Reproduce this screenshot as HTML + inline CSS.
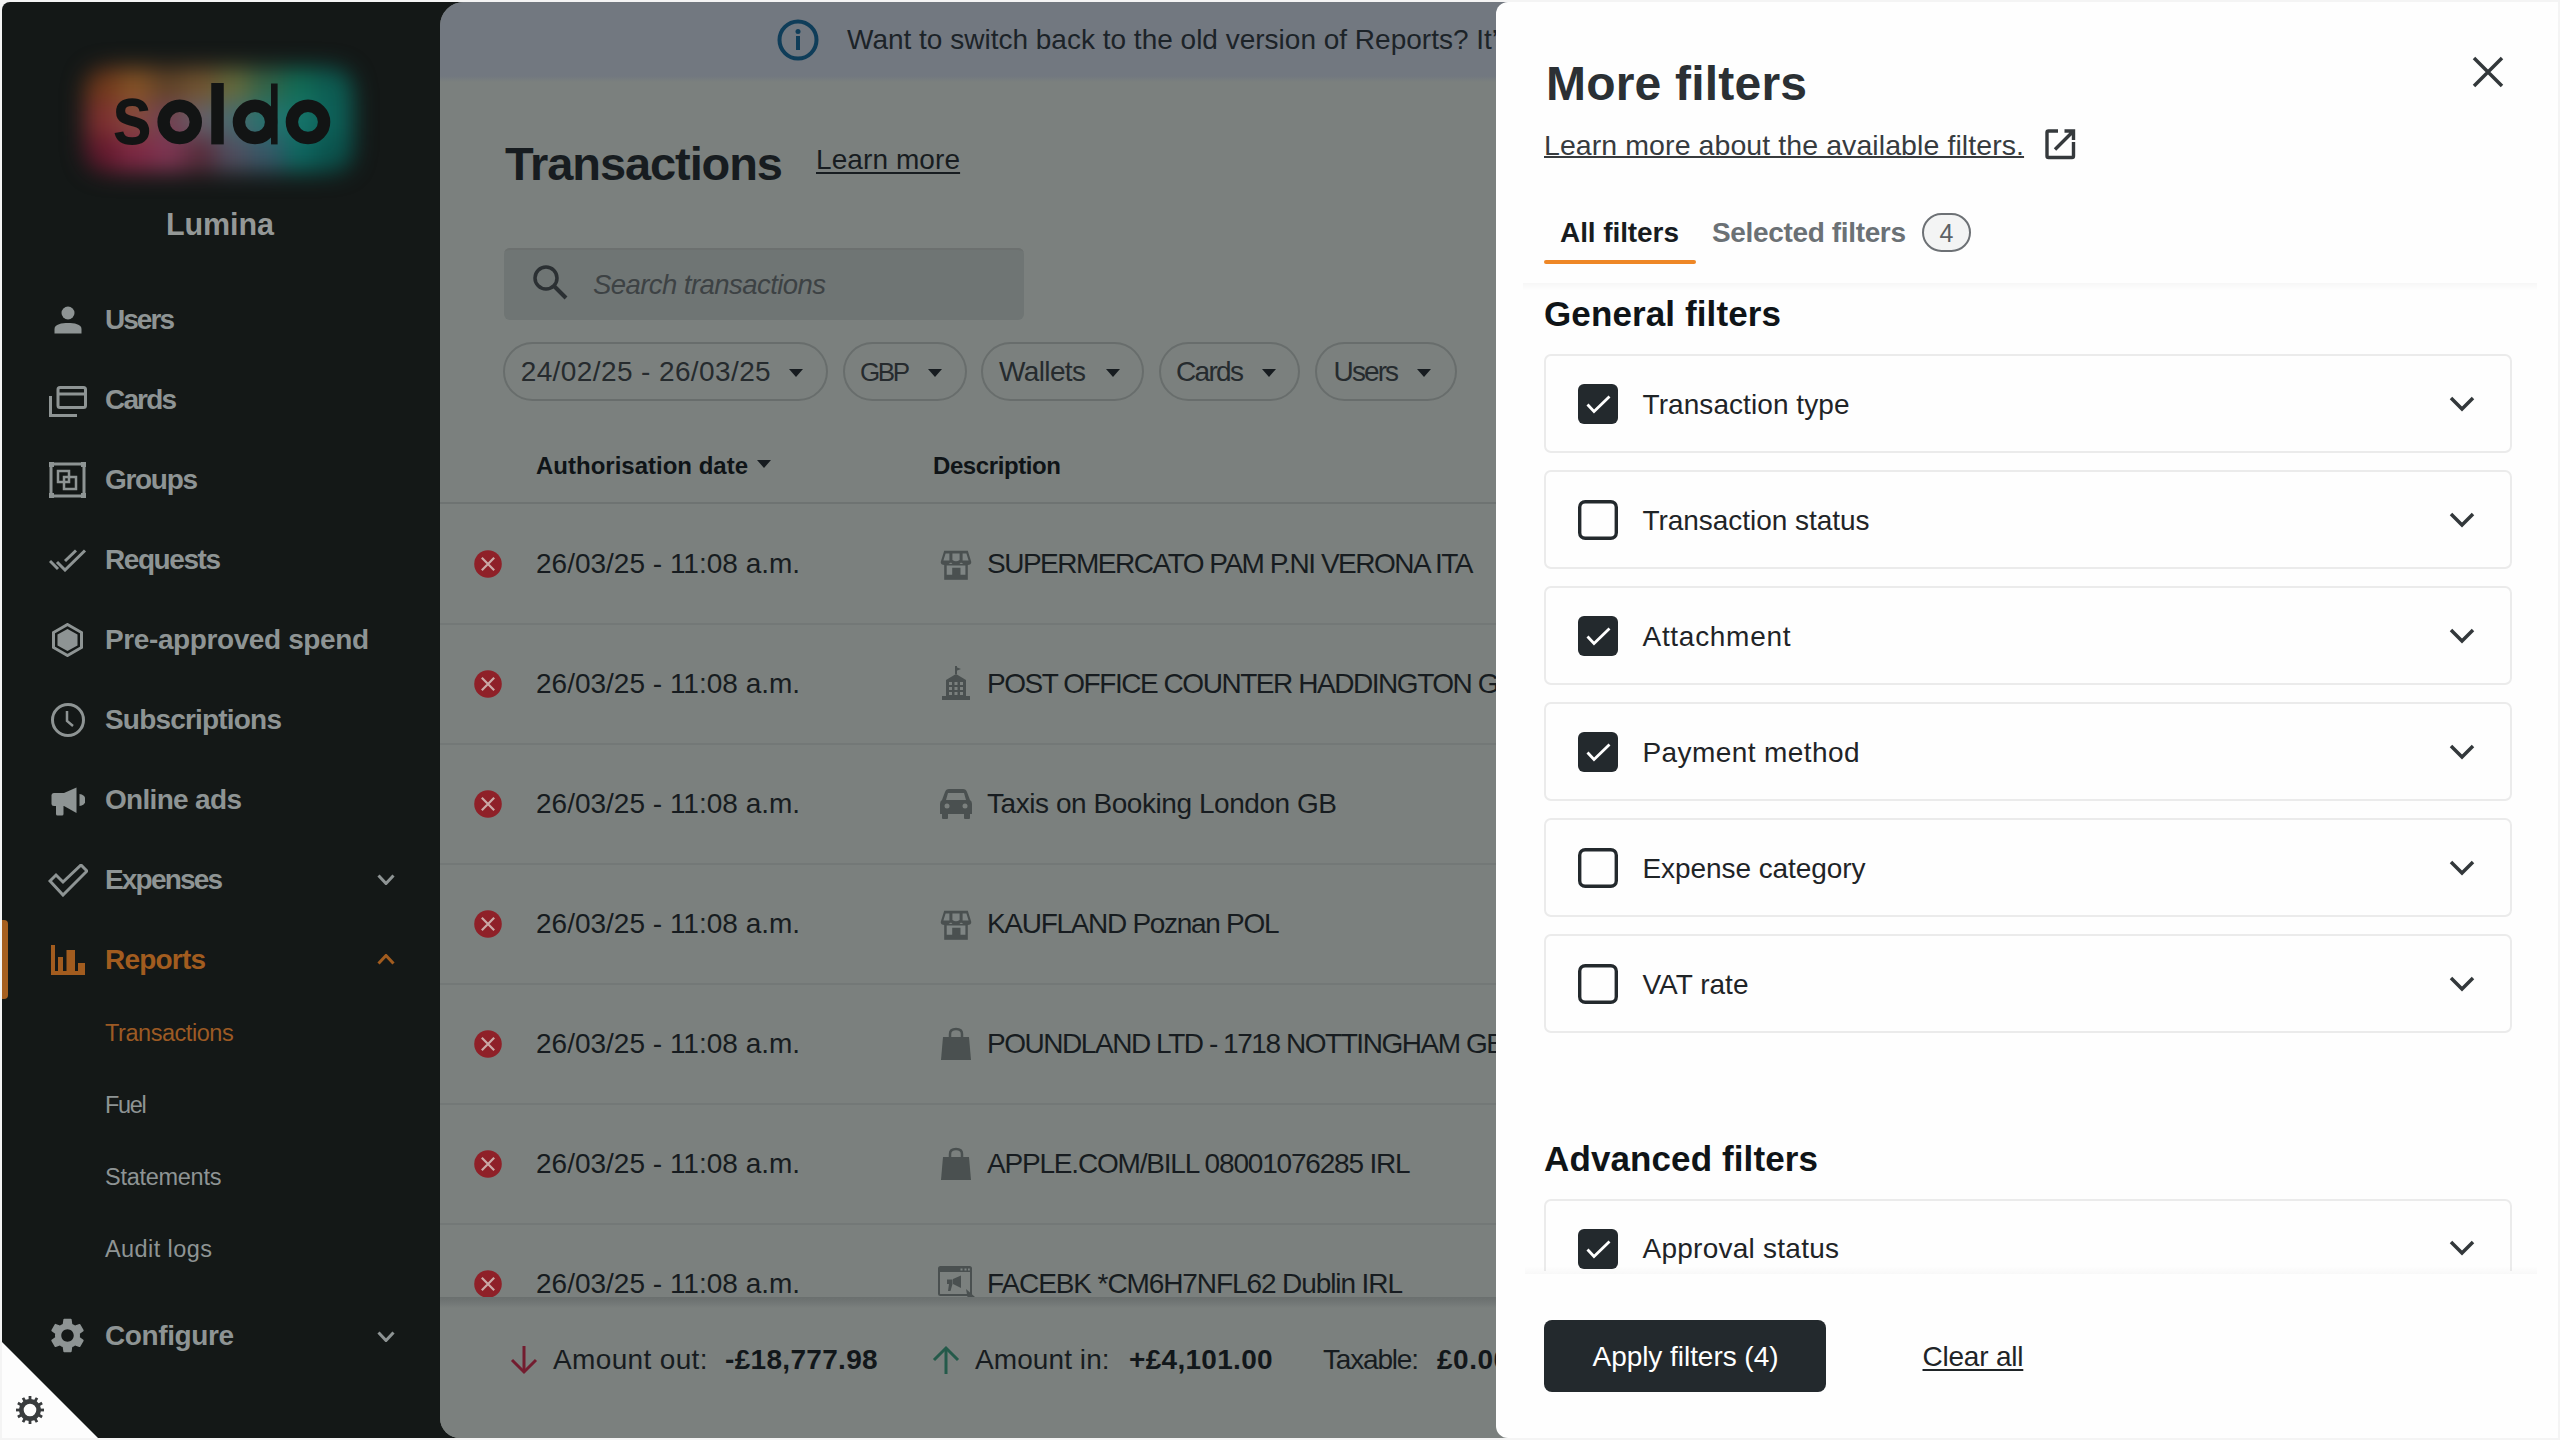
<!DOCTYPE html>
<html><head><meta charset="utf-8">
<style>
*{box-sizing:border-box;margin:0;padding:0}
html,body{width:2560px;height:1440px;overflow:hidden;background:#f4f4f4;font-family:"Liberation Sans",sans-serif;position:relative}
.abs{position:absolute;display:block}
.t{position:absolute;white-space:nowrap;line-height:1}
</style></head><body>
<div class="abs" style="left:2px;top:2px;width:2556px;height:1436px;background:#141817;border-radius:8px"></div>
<div class="abs" style="left:440px;top:2px;width:1120px;height:1436px;background:#7b807e;border-radius:24px 0 0 20px"></div>
<div class="abs" style="left:440px;top:2px;width:1120px;height:80px;background:linear-gradient(#727880 0,#727880 74px,#7b807e 80px);border-radius:24px 0 0 0"></div>
<div class="abs" style="left:0px;top:0px;width:440px;height:260px;filter:blur(11px)"><div class="abs" style="left:85px;top:68px;width:38px;height:36px;background:#70391c;border-top-left-radius:60%;"></div><div class="abs" style="left:118px;top:68px;width:38px;height:36px;background:#845226;"></div><div class="abs" style="left:151px;top:68px;width:38px;height:36px;background:#624428;"></div><div class="abs" style="left:184px;top:68px;width:38px;height:36px;background:#725430;"></div><div class="abs" style="left:217px;top:68px;width:38px;height:36px;background:#646a3c;"></div><div class="abs" style="left:250px;top:68px;width:38px;height:36px;background:#346448;"></div><div class="abs" style="left:283px;top:68px;width:38px;height:36px;background:#126c56;"></div><div class="abs" style="left:315px;top:68px;width:38px;height:36px;background:#0d5c52;border-top-right-radius:60%;"></div><div class="abs" style="left:85px;top:102px;width:38px;height:36px;background:#7e3030;"></div><div class="abs" style="left:118px;top:102px;width:38px;height:36px;background:#84493f;"></div><div class="abs" style="left:151px;top:102px;width:38px;height:36px;background:#704252;"></div><div class="abs" style="left:184px;top:102px;width:38px;height:36px;background:#665f68;"></div><div class="abs" style="left:217px;top:102px;width:38px;height:36px;background:#476a6e;"></div><div class="abs" style="left:250px;top:102px;width:38px;height:36px;background:#26726e;"></div><div class="abs" style="left:283px;top:102px;width:38px;height:36px;background:#16746a;"></div><div class="abs" style="left:315px;top:102px;width:38px;height:36px;background:#0d6058;"></div><div class="abs" style="left:85px;top:136px;width:38px;height:36px;background:#641a2e;border-bottom-left-radius:60%;"></div><div class="abs" style="left:118px;top:136px;width:38px;height:36px;background:#7e2844;"></div><div class="abs" style="left:151px;top:136px;width:38px;height:36px;background:#7e3552;"></div><div class="abs" style="left:184px;top:136px;width:38px;height:36px;background:#5a2e3e;"></div><div class="abs" style="left:217px;top:136px;width:38px;height:36px;background:#504f60;"></div><div class="abs" style="left:250px;top:136px;width:38px;height:36px;background:#385868;"></div><div class="abs" style="left:283px;top:136px;width:38px;height:36px;background:#0f6660;"></div><div class="abs" style="left:315px;top:136px;width:38px;height:36px;background:#0b544e;border-bottom-right-radius:60%;"></div></div>
<svg class="abs" style="left:100px;top:70px;" width="250" height="80" viewBox="0 0 250 80"><g fill="#121414"><rect x="111.25" y="13" width="12.5" height="61.4"/><circle cx="79.7" cy="51.9" r="16.1" fill="none" stroke="#121414" stroke-width="12.4"/><circle cx="155" cy="51.9" r="16.1" fill="none" stroke="#121414" stroke-width="12.4"/><rect x="171" y="13.5" width="6.6" height="60.9"/><circle cx="208" cy="51.9" r="16.1" fill="none" stroke="#121414" stroke-width="12.4"/></g></svg>
<div class="t" style="left:111.5px;top:71.3px;font-size:86px;font-weight:700;color:#121414;transform:scaleX(0.84);transform-origin:0 0;">s</div>
<div class="t" style="left:166px;top:209.1px;font-size:30.5px;font-weight:700;color:#949897;letter-spacing:-0.091px;">Lumina</div>
<div class="t" style="left:105px;top:306.2px;font-size:28px;font-weight:700;color:#8e9494;letter-spacing:-1.961px;">Users</div>
<div class="t" style="left:105px;top:386.2px;font-size:28px;font-weight:700;color:#8e9494;letter-spacing:-1.844px;">Cards</div>
<div class="t" style="left:105px;top:466.2px;font-size:28px;font-weight:700;color:#8e9494;letter-spacing:-1.312px;">Groups</div>
<div class="t" style="left:105px;top:546.2px;font-size:28px;font-weight:700;color:#8e9494;letter-spacing:-1.435px;">Requests</div>
<div class="t" style="left:105px;top:626.2px;font-size:28px;font-weight:700;color:#8e9494;letter-spacing:-0.396px;">Pre-approved spend</div>
<div class="t" style="left:105px;top:706.2px;font-size:28px;font-weight:700;color:#8e9494;letter-spacing:-0.809px;">Subscriptions</div>
<div class="t" style="left:105px;top:786.2px;font-size:28px;font-weight:700;color:#8e9494;letter-spacing:-0.684px;">Online ads</div>
<div class="t" style="left:105px;top:866.2px;font-size:28px;font-weight:700;color:#8e9494;letter-spacing:-1.821px;">Expenses</div>
<div class="t" style="left:105px;top:946.2px;font-size:28px;font-weight:700;color:#a25c1f;letter-spacing:-0.799px;">Reports</div>
<div class="abs" style="left:2px;top:920px;width:6px;height:79px;background:#a65f20;border-radius:0 4px 4px 0"></div>
<div class="t" style="left:105px;top:1022.0px;font-size:23.5px;font-weight:400;color:#9c5a24;letter-spacing:-0.451px;">Transactions</div>
<div class="t" style="left:105px;top:1094.0px;font-size:23.5px;font-weight:400;color:#8e9494;letter-spacing:-1.34px;">Fuel</div>
<div class="t" style="left:105px;top:1166.0px;font-size:23.5px;font-weight:400;color:#8e9494;letter-spacing:-0.275px;">Statements</div>
<div class="t" style="left:105px;top:1238.0px;font-size:23.5px;font-weight:400;color:#8e9494;letter-spacing:0.422px;">Audit logs</div>
<div class="t" style="left:105px;top:1322.2px;font-size:28px;font-weight:700;color:#8e9494;letter-spacing:-0.402px;">Configure</div>
<svg class="abs" style="left:377px;top:874px;" width="18" height="11" viewBox="0 0 18 11"><polyline points="1.5,1.5 9.0,9.5 16.5,1.5" fill="none" stroke="#8e9494" stroke-width="3"/></svg>
<svg class="abs" style="left:377px;top:954px;" width="18" height="11" viewBox="0 0 18 11"><polyline points="1.5,9.5 9.0,1.5 16.5,9.5" fill="none" stroke="#a25c1f" stroke-width="3"/></svg>
<svg class="abs" style="left:377px;top:1331px;" width="18" height="11" viewBox="0 0 18 11"><polyline points="1.5,1.5 9.0,9.5 16.5,1.5" fill="none" stroke="#8e9494" stroke-width="3"/></svg>
<svg class="abs" style="left:54px;top:306px;" width="28" height="28" viewBox="0 0 28 28"><circle cx="14" cy="7" r="6.5" fill="#8e9494"/><path d="M0.5 27.5 V23 C0.5 18 8 17 14 17 C20 17 27.5 18 27.5 23 V27.5 Z" fill="#8e9494"/></svg>
<svg class="abs" style="left:49px;top:386px;" width="38" height="31" viewBox="0 0 38 31"><rect x="9" y="1.5" width="27.5" height="20" rx="2" fill="none" stroke="#8e9494" stroke-width="3"/><line x1="9" y1="8" x2="36" y2="8" stroke="#8e9494" stroke-width="3"/><path d="M1.5 10 V29.5 H28" fill="none" stroke="#8e9494" stroke-width="3"/></svg>
<svg class="abs" style="left:49px;top:462px;" width="37" height="36" viewBox="0 0 37 36"><rect x="2" y="2" width="33" height="32" fill="none" stroke="#8e9494" stroke-width="3"/><rect x="0" y="0" width="5" height="5" fill="#8e9494"/><rect x="32" y="0" width="5" height="5" fill="#8e9494"/><rect x="0" y="31" width="5" height="5" fill="#8e9494"/><rect x="32" y="31" width="5" height="5" fill="#8e9494"/><rect x="9" y="9" width="11" height="11" fill="none" stroke="#8e9494" stroke-width="2.5"/><rect x="15" y="15" width="12" height="12" fill="none" stroke="#8e9494" stroke-width="2.5"/></svg>
<svg class="abs" style="left:49px;top:549px;" width="38" height="23" viewBox="0 0 38 23"><polyline points="1,12 9,20 " fill="none" stroke="#8e9494" stroke-width="3"/><polyline points="8,13 16,21 36,1.5" fill="none" stroke="#8e9494" stroke-width="3"/><polyline points="16,12 27,1.5" fill="none" stroke="#8e9494" stroke-width="3"/></svg>
<svg class="abs" style="left:52px;top:623px;" width="31" height="34" viewBox="0 0 31 34"><polygon points="15.5,1.5 29.5,9.5 29.5,24.5 15.5,32.5 1.5,24.5 1.5,9.5" fill="none" stroke="#8e9494" stroke-width="3"/><polygon points="15.5,6 25.5,11.5 25.5,22.5 15.5,28 5.5,22.5 5.5,11.5" fill="#8e9494"/></svg>
<svg class="abs" style="left:50px;top:702px;" width="36" height="36" viewBox="0 0 36 36"><circle cx="18" cy="18" r="15.5" fill="none" stroke="#8e9494" stroke-width="3"/><polyline points="17,9 17,19 23,24" fill="none" stroke="#8e9494" stroke-width="2.5"/></svg>
<svg class="abs" style="left:50px;top:787px;" width="35" height="29" viewBox="0 0 35 29"><rect x="1.5" y="6" width="15" height="13" rx="2.5" fill="#8e9494"/><polygon points="14,6 26.5,0.5 26.5,26 14,19" fill="#8e9494"/><rect x="6" y="16" width="7.5" height="12.5" rx="1.5" fill="#8e9494"/><path d="M29.5 7 A6 6 0 0 1 29.5 19 Z" fill="#8e9494"/></svg>
<svg class="abs" style="left:48px;top:864px;" width="40" height="33" viewBox="0 0 40 33"><polygon points="2,17 8,11 15,18 33,1 39,7 15,31" fill="none" stroke="#8e9494" stroke-width="3" stroke-linejoin="miter"/></svg>
<svg class="abs" style="left:51px;top:945px;" width="34" height="31" viewBox="0 0 34 31"><rect x="0" y="0" width="4" height="30" fill="#a25c1f"/><rect x="0" y="26" width="34" height="4" fill="#a25c1f"/><rect x="7" y="12" width="5" height="18" fill="#a25c1f"/><rect x="15.5" y="5" width="8.5" height="25" fill="#a25c1f"/><rect x="27" y="18" width="7" height="12" fill="#a25c1f"/></svg>
<svg class="abs" style="left:50px;top:1318px;" width="35" height="35" viewBox="2.6 1.9 18.8 20.2"><path fill="#8e9494" d="M19.14 12.94c.04-.3.06-.61.06-.94 0-.32-.02-.64-.07-.94l2.03-1.58a.49.49 0 0 0 .12-.61l-1.92-3.32a.49.49 0 0 0-.59-.22l-2.39.96c-.5-.38-1.03-.7-1.62-.94l-.36-2.54a.48.48 0 0 0-.48-.41h-3.840c-.24 0-.43.17-.47.41l-.36 2.54c-.59.24-1.130.57-1.62.94l-2.39-.96a.48.48 0 0 0-.59.22L2.74 8.87c-.12.21-.08.47.12.61l2.03 1.58c-.05.3-.09.63-.09.94s.02.64.07.94l-2.03 1.58a.49.49 0 0 0-.12.61l1.92 3.32c.12.22.37.29.59.22l2.39-.96c.5.38 1.03.7 1.62.94l.36 2.54c.05.24.24.41.48.41h3.84c.24 0 .44-.17.47-.41l.36-2.54c.59-.24 1.13-.56 1.62-.94l2.39.96c.22.08.47 0 .59-.22l1.92-3.32c.12-.22.07-.47-.12-.61l-2.01-1.58zM12 15.6c-1.98 0-3.6-1.62-3.6-3.6s1.62-3.6 3.6-3.6 3.6 1.62 3.6 3.6-1.62 3.6-3.6 3.6z"/></svg>
<svg class="abs" style="left:2px;top:1342px;" width="96" height="96" viewBox="0 0 96 96"><polygon points="0,0 96,96 0,96" fill="#fdfdfd"/></svg>
<svg class="abs" style="left:16px;top:1396px;" width="28" height="28" viewBox="0 0 28 28"><g fill="#393c3e"><rect x="12.6" y="0" width="2.8" height="5" transform="rotate(0 14 14)"/><rect x="12.6" y="0" width="2.8" height="5" transform="rotate(30 14 14)"/><rect x="12.6" y="0" width="2.8" height="5" transform="rotate(60 14 14)"/><rect x="12.6" y="0" width="2.8" height="5" transform="rotate(90 14 14)"/><rect x="12.6" y="0" width="2.8" height="5" transform="rotate(120 14 14)"/><rect x="12.6" y="0" width="2.8" height="5" transform="rotate(150 14 14)"/><rect x="12.6" y="0" width="2.8" height="5" transform="rotate(180 14 14)"/><rect x="12.6" y="0" width="2.8" height="5" transform="rotate(210 14 14)"/><rect x="12.6" y="0" width="2.8" height="5" transform="rotate(240 14 14)"/><rect x="12.6" y="0" width="2.8" height="5" transform="rotate(270 14 14)"/><rect x="12.6" y="0" width="2.8" height="5" transform="rotate(300 14 14)"/><rect x="12.6" y="0" width="2.8" height="5" transform="rotate(330 14 14)"/></g><circle cx="14" cy="14" r="8.6" fill="none" stroke="#393c3e" stroke-width="4.6"/></svg>
<svg class="abs" style="left:777px;top:19px;" width="42" height="42" viewBox="0 0 42 42"><circle cx="21" cy="21" r="18.5" fill="none" stroke="#0f3d59" stroke-width="4"/><rect x="19" y="17" width="4" height="14" fill="#0f3d59"/><circle cx="21" cy="12.5" r="2.5" fill="#0f3d59"/></svg>
<div class="t" style="left:847px;top:26.2px;font-size:28px;font-weight:400;color:#1c2328;">Want to switch back to the old version of Reports? It&#8217;s still available</div>
<div class="t" style="left:505px;top:140.1px;font-size:47px;font-weight:700;color:#171c20;letter-spacing:-1.087px;">Transactions</div>
<div class="t" style="left:816px;top:146.2px;font-size:28px;font-weight:400;color:#171c20;letter-spacing:0.09px;text-decoration:underline;text-underline-offset:3px;text-decoration-thickness:2px;">Learn more</div>
<div class="abs" style="left:504px;top:248px;width:520px;height:72px;background:#6f7574;border-radius:6px;box-shadow:inset 0 6px 0 -4px #6c706f"></div>
<svg class="abs" style="left:532px;top:264px;" width="38" height="38" viewBox="0 0 38 38"><circle cx="14" cy="14" r="11" fill="none" stroke="#2b3033" stroke-width="3.5"/><line x1="22" y1="22" x2="34" y2="34" stroke="#2b3033" stroke-width="4"/></svg>
<div class="t" style="left:593px;top:270.6px;font-size:27.5px;font-weight:400;color:#3d4244;letter-spacing:-0.558px;font-style:italic;">Search transactions</div>
<div class="abs" style="left:503px;top:342px;width:325px;height:59px;border:2px solid #686d6c;border-radius:30px"></div>
<div class="t" style="left:520.7px;top:357.7px;font-size:28px;font-weight:400;color:#262b2e;letter-spacing:0.396px;">24/02/25 - 26/03/25</div>
<svg class="abs" style="left:789px;top:367.5px;" width="14" height="10" viewBox="0 0 14 10"><polygon points="0,1 14,1 7,9" fill="#171c20"/></svg>
<div class="abs" style="left:842.5px;top:342px;width:124.20000000000005px;height:59px;border:2px solid #686d6c;border-radius:30px"></div>
<div class="t" style="left:860px;top:359.4px;font-size:26px;font-weight:400;color:#262b2e;letter-spacing:-2.461px;">GBP</div>
<svg class="abs" style="left:928px;top:367.5px;" width="14" height="10" viewBox="0 0 14 10"><polygon points="0,1 14,1 7,9" fill="#171c20"/></svg>
<div class="abs" style="left:980.8px;top:342px;width:163.20000000000005px;height:59px;border:2px solid #686d6c;border-radius:30px"></div>
<div class="t" style="left:999px;top:357.7px;font-size:28px;font-weight:400;color:#262b2e;letter-spacing:-0.628px;">Wallets</div>
<svg class="abs" style="left:1106px;top:367.5px;" width="14" height="10" viewBox="0 0 14 10"><polygon points="0,1 14,1 7,9" fill="#171c20"/></svg>
<div class="abs" style="left:1158.8px;top:342px;width:141.70000000000005px;height:59px;border:2px solid #686d6c;border-radius:30px"></div>
<div class="t" style="left:1176px;top:357.7px;font-size:28px;font-weight:400;color:#262b2e;letter-spacing:-1.676px;">Cards</div>
<svg class="abs" style="left:1262px;top:367.5px;" width="14" height="10" viewBox="0 0 14 10"><polygon points="0,1 14,1 7,9" fill="#171c20"/></svg>
<div class="abs" style="left:1314.5px;top:342px;width:142.0999999999999px;height:59px;border:2px solid #686d6c;border-radius:30px"></div>
<div class="t" style="left:1333.6px;top:357.7px;font-size:28px;font-weight:400;color:#262b2e;letter-spacing:-1.906px;">Users</div>
<svg class="abs" style="left:1417px;top:367.5px;" width="14" height="10" viewBox="0 0 14 10"><polygon points="0,1 14,1 7,9" fill="#171c20"/></svg>
<div class="t" style="left:536px;top:453.6px;font-size:24px;font-weight:700;color:#0f1417;">Authorisation date</div>
<svg class="abs" style="left:757px;top:459px;" width="14" height="10" viewBox="0 0 14 10"><polygon points="0,1 14,1 7,9" fill="#171c20"/></svg>
<div class="t" style="left:933px;top:453.6px;font-size:24px;font-weight:700;color:#0f1417;letter-spacing:-0.403px;">Description</div>
<div class="abs" style="left:440px;top:502px;width:1060px;height:2px;background:#6e7372"></div>
<svg class="abs" style="left:474px;top:550px;" width="28" height="28" viewBox="0 0 28 28"><circle cx="14" cy="14" r="13.8" fill="#8f2028"/><path d="M7.8 7.8 L20.2 20.2 M20.2 7.8 L7.8 20.2" stroke="#caa9a6" stroke-width="2.2"/></svg>
<div class="t" style="left:536px;top:550.2px;font-size:28px;font-weight:400;color:#171c20;">26/03/25 - 11:08 a.m.</div>
<div class="t" style="left:987px;top:550.2px;font-size:28px;font-weight:400;color:#171c20;letter-spacing:-1.488px;">SUPERMERCATO PAM P.NI VERONA ITA</div>
<svg class="abs" style="left:940px;top:550px;" width="32" height="31" viewBox="0 0 32 31"><path d="M4.2 0.8 H27.8 L31.3 12 Q31.3 15 27.6 15 Q24.2 15 21 12.5 Q19 15.5 16 15.5 Q13 15.5 11 12.5 Q7.8 15 4.4 15 Q0.7 15 0.7 12 Z" fill="#4a5050"/><path d="M5.6 3.4 H9.4 V10.6 H3.4 Z M12.4 3.4 H19.6 V10 Q16 12.6 12.4 10 Z M22.6 3.4 H26.4 L28.6 10.6 H22.6 Z" fill="#7d8382"/><rect x="4.2" y="14" width="23.6" height="15.8" fill="#4a5050"/><path d="M6.7 15.5 H25.4 V24.7 H20.5 V17.8 H12.2 V24.7 H6.7 Z" fill="#7f8584"/></svg>
<div class="abs" style="left:440px;top:623px;width:1060px;height:2px;background:#737877"></div>
<svg class="abs" style="left:474px;top:670px;" width="28" height="28" viewBox="0 0 28 28"><circle cx="14" cy="14" r="13.8" fill="#8f2028"/><path d="M7.8 7.8 L20.2 20.2 M20.2 7.8 L7.8 20.2" stroke="#caa9a6" stroke-width="2.2"/></svg>
<div class="t" style="left:536px;top:670.2px;font-size:28px;font-weight:400;color:#171c20;">26/03/25 - 11:08 a.m.</div>
<div class="t" style="left:987px;top:670.2px;font-size:28px;font-weight:400;color:#171c20;letter-spacing:-1.45px;">POST OFFICE COUNTER HADDINGTON GB</div>
<svg class="abs" style="left:940px;top:666px;" width="32" height="34" viewBox="0 0 32 34"><line x1="16" y1="0" x2="16" y2="8" stroke="#4a5050" stroke-width="2"/><path d="M16 1 L21 3 L16 5 Z" fill="#4a5050"/><path d="M6 14 L16 8 L26 14 V31 H6 Z" fill="#4a5050"/><rect x="2" y="30" width="28" height="4" fill="#4a5050"/><g fill="#7b807e"><rect x="9" y="16" width="3" height="3"/><rect x="14.5" y="16" width="3" height="3"/><rect x="20" y="16" width="3" height="3"/><rect x="9" y="21" width="3" height="3"/><rect x="14.5" y="21" width="3" height="3"/><rect x="20" y="21" width="3" height="3"/><rect x="9" y="26" width="3" height="3"/><rect x="14.5" y="26" width="3" height="3"/><rect x="20" y="26" width="3" height="3"/></g></svg>
<div class="abs" style="left:440px;top:743px;width:1060px;height:2px;background:#737877"></div>
<svg class="abs" style="left:474px;top:790px;" width="28" height="28" viewBox="0 0 28 28"><circle cx="14" cy="14" r="13.8" fill="#8f2028"/><path d="M7.8 7.8 L20.2 20.2 M20.2 7.8 L7.8 20.2" stroke="#caa9a6" stroke-width="2.2"/></svg>
<div class="t" style="left:536px;top:790.2px;font-size:28px;font-weight:400;color:#171c20;">26/03/25 - 11:08 a.m.</div>
<div class="t" style="left:987px;top:790.2px;font-size:28px;font-weight:400;color:#171c20;letter-spacing:-0.446px;">Taxis on Booking London GB</div>
<svg class="abs" style="left:939px;top:788px;" width="34" height="32" viewBox="0 0 34 32"><path d="M6 4 Q7 1 10 1 H24 Q27 1 28 4 L31 12 Q33 13 33 16 V26 H1 V16 Q1 13 3 12 Z" fill="#4a5050"/><path d="M7 12 L9 5 H25 L27 12 Z" fill="#7b807e"/><rect x="3" y="25" width="6" height="6" rx="1" fill="#4a5050"/><rect x="25" y="25" width="6" height="6" rx="1" fill="#4a5050"/><circle cx="8" cy="18" r="2.5" fill="#7b807e"/><circle cx="26" cy="18" r="2.5" fill="#7b807e"/></svg>
<div class="abs" style="left:440px;top:863px;width:1060px;height:2px;background:#737877"></div>
<svg class="abs" style="left:474px;top:910px;" width="28" height="28" viewBox="0 0 28 28"><circle cx="14" cy="14" r="13.8" fill="#8f2028"/><path d="M7.8 7.8 L20.2 20.2 M20.2 7.8 L7.8 20.2" stroke="#caa9a6" stroke-width="2.2"/></svg>
<div class="t" style="left:536px;top:910.2px;font-size:28px;font-weight:400;color:#171c20;">26/03/25 - 11:08 a.m.</div>
<div class="t" style="left:987px;top:910.2px;font-size:28px;font-weight:400;color:#171c20;letter-spacing:-1.301px;">KAUFLAND Poznan POL</div>
<svg class="abs" style="left:940px;top:910px;" width="32" height="31" viewBox="0 0 32 31"><path d="M4.2 0.8 H27.8 L31.3 12 Q31.3 15 27.6 15 Q24.2 15 21 12.5 Q19 15.5 16 15.5 Q13 15.5 11 12.5 Q7.8 15 4.4 15 Q0.7 15 0.7 12 Z" fill="#4a5050"/><path d="M5.6 3.4 H9.4 V10.6 H3.4 Z M12.4 3.4 H19.6 V10 Q16 12.6 12.4 10 Z M22.6 3.4 H26.4 L28.6 10.6 H22.6 Z" fill="#7d8382"/><rect x="4.2" y="14" width="23.6" height="15.8" fill="#4a5050"/><path d="M6.7 15.5 H25.4 V24.7 H20.5 V17.8 H12.2 V24.7 H6.7 Z" fill="#7f8584"/></svg>
<div class="abs" style="left:440px;top:983px;width:1060px;height:2px;background:#737877"></div>
<svg class="abs" style="left:474px;top:1030px;" width="28" height="28" viewBox="0 0 28 28"><circle cx="14" cy="14" r="13.8" fill="#8f2028"/><path d="M7.8 7.8 L20.2 20.2 M20.2 7.8 L7.8 20.2" stroke="#caa9a6" stroke-width="2.2"/></svg>
<div class="t" style="left:536px;top:1030.2px;font-size:28px;font-weight:400;color:#171c20;">26/03/25 - 11:08 a.m.</div>
<div class="t" style="left:987px;top:1030.2px;font-size:28px;font-weight:400;color:#171c20;letter-spacing:-1.45px;">POUNDLAND LTD - 1718 NOTTINGHAM GB</div>
<svg class="abs" style="left:940px;top:1027px;" width="32" height="34" viewBox="0 0 32 34"><path d="M10 11 V7 Q10 2 16 2 Q22 2 22 7 V11" fill="none" stroke="#4a5050" stroke-width="2.5"/><path d="M3 10 H29 L31 33 H1 Z" fill="#4a5050"/></svg>
<div class="abs" style="left:440px;top:1103px;width:1060px;height:2px;background:#737877"></div>
<svg class="abs" style="left:474px;top:1150px;" width="28" height="28" viewBox="0 0 28 28"><circle cx="14" cy="14" r="13.8" fill="#8f2028"/><path d="M7.8 7.8 L20.2 20.2 M20.2 7.8 L7.8 20.2" stroke="#caa9a6" stroke-width="2.2"/></svg>
<div class="t" style="left:536px;top:1150.2px;font-size:28px;font-weight:400;color:#171c20;">26/03/25 - 11:08 a.m.</div>
<div class="t" style="left:987px;top:1150.2px;font-size:28px;font-weight:400;color:#171c20;letter-spacing:-1.192px;">APPLE.COM/BILL 08001076285 IRL</div>
<svg class="abs" style="left:940px;top:1147px;" width="32" height="34" viewBox="0 0 32 34"><path d="M10 11 V7 Q10 2 16 2 Q22 2 22 7 V11" fill="none" stroke="#4a5050" stroke-width="2.5"/><path d="M3 10 H29 L31 33 H1 Z" fill="#4a5050"/></svg>
<div class="abs" style="left:440px;top:1223px;width:1060px;height:2px;background:#737877"></div>
<svg class="abs" style="left:474px;top:1270px;" width="28" height="28" viewBox="0 0 28 28"><circle cx="14" cy="14" r="13.8" fill="#8f2028"/><path d="M7.8 7.8 L20.2 20.2 M20.2 7.8 L7.8 20.2" stroke="#caa9a6" stroke-width="2.2"/></svg>
<div class="t" style="left:536px;top:1270.2px;font-size:28px;font-weight:400;color:#171c20;">26/03/25 - 11:08 a.m.</div>
<div class="t" style="left:987px;top:1270.2px;font-size:28px;font-weight:400;color:#171c20;letter-spacing:-1.094px;">FACEBK *CM6H7NFL62 Dublin IRL</div>
<svg class="abs" style="left:938px;top:1266px;" width="38" height="36" viewBox="0 0 38 36"><rect x="1" y="1" width="32" height="28" rx="1.5" fill="none" stroke="#4a5050" stroke-width="2"/><rect x="1" y="1" width="32" height="5" fill="#4a5050"/><g fill="#7d8382"><rect x="22.5" y="2.5" width="2" height="2"/><rect x="26.5" y="2.5" width="2" height="2"/><rect x="30" y="2.5" width="1.8" height="2"/></g><path d="M15 13 L23 9.5 V22 L15 18 Z" fill="#4a5050"/><path d="M9 13.5 H14.5 V18 L12.5 25 H10 L11 18 H9 Z" fill="#4a5050"/><path d="M28 23 L37 31 L32.5 31 L30 34 Z" fill="#4a5050"/></svg>
<div class="abs" style="left:440px;top:1298px;width:1060px;height:140px;background:#7b807e;border-radius:0 0 0 20px"></div>
<div class="abs" style="left:440px;top:1297px;width:1060px;height:11px;background:linear-gradient(#6a6f6e,#737877 60%,#7b807e)"></div>
<svg class="abs" style="left:509px;top:1345px;" width="30" height="30" viewBox="0 0 30 30"><line x1="15" y1="1" x2="15" y2="27" stroke="#731c2f" stroke-width="3"/><polyline points="3,15 15,27 27,15" fill="none" stroke="#731c2f" stroke-width="3"/></svg>
<div class="t" style="left:553px;top:1346.2px;font-size:28px;font-weight:400;color:#171c20;letter-spacing:0.352px;">Amount out:</div>
<div class="t" style="left:725px;top:1346.2px;font-size:28px;font-weight:700;color:#12171a;letter-spacing:0.323px;">-&#163;18,777.98</div>
<svg class="abs" style="left:931px;top:1345px;" width="30" height="30" viewBox="0 0 30 30"><line x1="15" y1="29" x2="15" y2="3" stroke="#245a4a" stroke-width="3"/><polyline points="3,15 15,3 27,15" fill="none" stroke="#245a4a" stroke-width="3"/></svg>
<div class="t" style="left:975px;top:1346.2px;font-size:28px;font-weight:400;color:#171c20;letter-spacing:0.082px;">Amount in:</div>
<div class="t" style="left:1129px;top:1346.2px;font-size:28px;font-weight:700;color:#12171a;letter-spacing:0.298px;">+&#163;4,101.00</div>
<div class="t" style="left:1323px;top:1346.2px;font-size:28px;font-weight:400;color:#171c20;letter-spacing:-1.185px;">Taxable:</div>
<div class="t" style="left:1437px;top:1346.2px;font-size:28px;font-weight:700;color:#12171a;letter-spacing:0.5px;">&#163;0.00</div>
<div class="abs" style="left:1496px;top:2px;width:1062px;height:1436px;background:#fefefe;border-radius:12px 0 0 12px"></div>
<div class="t" style="left:1546px;top:59.7px;font-size:48px;font-weight:700;color:#2b3034;letter-spacing:0.206px;">More filters</div>
<svg class="abs" style="left:2472px;top:56px;" width="32" height="32" viewBox="0 0 32 32"><path d="M2 2 L30 30 M30 2 L2 30" stroke="#33383b" stroke-width="3.5"/></svg>
<div class="t" style="left:1544px;top:130.8px;font-size:28.5px;font-weight:400;color:#373b3e;letter-spacing:0.082px;text-decoration:underline;text-underline-offset:1px;text-decoration-thickness:2px;">Learn more about the available filters.</div>
<svg class="abs" style="left:2044px;top:128px;" width="32" height="32" viewBox="0 0 32 32"><path d="M14 3 H4.5 Q3 3 3 4.5 V28 Q3 29.5 4.5 29.5 H28 Q29.5 29.5 29.5 28 V14" fill="none" stroke="#35393c" stroke-width="3.4"/><path d="M20.5 3 H29.5 V12 M29.5 3 L11 21.5" fill="none" stroke="#35393c" stroke-width="3.4"/></svg>
<div class="t" style="left:1560px;top:218.7px;font-size:28px;font-weight:700;color:#171c1f;letter-spacing:-0.081px;">All filters</div>
<div class="abs" style="left:1544px;top:260px;width:152px;height:4px;background:#ee8726;border-radius:2px"></div>
<div class="t" style="left:1712px;top:218.7px;font-size:28px;font-weight:700;color:#6b7175;letter-spacing:-0.347px;">Selected filters</div>
<div class="abs" style="left:1922px;top:213px;width:49px;height:39px;border:2px solid #6d7175;border-radius:20px;background:#f3f4f4"></div>
<div class="t" style="left:1939.5px;top:220.8px;font-size:25px;font-weight:400;color:#5c6165;">4</div>
<div class="abs" style="left:1523px;top:283px;width:1014px;height:8px;background:linear-gradient(rgba(0,0,0,0.03),rgba(0,0,0,0))"></div>
<div class="t" style="left:1544px;top:296.2px;font-size:35px;font-weight:700;color:#0f1417;letter-spacing:0.115px;">General filters</div>
<div class="abs" style="left:1544px;top:354px;width:968px;height:99px;border:2px solid #ebebeb;border-radius:7px;background:#fefefe"></div>
<svg class="abs" style="left:1578px;top:384px;" width="40" height="40" viewBox="0 0 40 40"><rect x="0" y="0" width="40" height="40" rx="6" fill="#23292d"/><polyline points="9.5,20.5 16,27.5 31.5,12.5" fill="none" stroke="#fff" stroke-width="2.8"/></svg>
<div class="t" style="left:1642.5px;top:390.7px;font-size:28px;font-weight:400;color:#1f2427;letter-spacing:0.07px;">Transaction type</div>
<svg class="abs" style="left:2449px;top:396px;" width="26" height="16" viewBox="0 0 26 16"><polyline points="2,2 13,13 24,2" fill="none" stroke="#33383b" stroke-width="3.5"/></svg>
<div class="abs" style="left:1544px;top:470px;width:968px;height:99px;border:2px solid #ebebeb;border-radius:7px;background:#fefefe"></div>
<svg class="abs" style="left:1578px;top:500px;" width="40" height="40" viewBox="0 0 40 40"><rect x="1.7" y="1.7" width="36.6" height="36.6" rx="5.5" fill="none" stroke="#23292d" stroke-width="3.4"/></svg>
<div class="t" style="left:1642.5px;top:506.7px;font-size:28px;font-weight:400;color:#1f2427;letter-spacing:-0.043px;">Transaction status</div>
<svg class="abs" style="left:2449px;top:512px;" width="26" height="16" viewBox="0 0 26 16"><polyline points="2,2 13,13 24,2" fill="none" stroke="#33383b" stroke-width="3.5"/></svg>
<div class="abs" style="left:1544px;top:586px;width:968px;height:99px;border:2px solid #ebebeb;border-radius:7px;background:#fefefe"></div>
<svg class="abs" style="left:1578px;top:616px;" width="40" height="40" viewBox="0 0 40 40"><rect x="0" y="0" width="40" height="40" rx="6" fill="#23292d"/><polyline points="9.5,20.5 16,27.5 31.5,12.5" fill="none" stroke="#fff" stroke-width="2.8"/></svg>
<div class="t" style="left:1642.5px;top:622.7px;font-size:28px;font-weight:400;color:#1f2427;letter-spacing:0.707px;">Attachment</div>
<svg class="abs" style="left:2449px;top:628px;" width="26" height="16" viewBox="0 0 26 16"><polyline points="2,2 13,13 24,2" fill="none" stroke="#33383b" stroke-width="3.5"/></svg>
<div class="abs" style="left:1544px;top:702px;width:968px;height:99px;border:2px solid #ebebeb;border-radius:7px;background:#fefefe"></div>
<svg class="abs" style="left:1578px;top:732px;" width="40" height="40" viewBox="0 0 40 40"><rect x="0" y="0" width="40" height="40" rx="6" fill="#23292d"/><polyline points="9.5,20.5 16,27.5 31.5,12.5" fill="none" stroke="#fff" stroke-width="2.8"/></svg>
<div class="t" style="left:1642.5px;top:738.7px;font-size:28px;font-weight:400;color:#1f2427;letter-spacing:0.41px;">Payment method</div>
<svg class="abs" style="left:2449px;top:744px;" width="26" height="16" viewBox="0 0 26 16"><polyline points="2,2 13,13 24,2" fill="none" stroke="#33383b" stroke-width="3.5"/></svg>
<div class="abs" style="left:1544px;top:818px;width:968px;height:99px;border:2px solid #ebebeb;border-radius:7px;background:#fefefe"></div>
<svg class="abs" style="left:1578px;top:848px;" width="40" height="40" viewBox="0 0 40 40"><rect x="1.7" y="1.7" width="36.6" height="36.6" rx="5.5" fill="none" stroke="#23292d" stroke-width="3.4"/></svg>
<div class="t" style="left:1642.5px;top:854.7px;font-size:28px;font-weight:400;color:#1f2427;letter-spacing:-0.076px;">Expense category</div>
<svg class="abs" style="left:2449px;top:860px;" width="26" height="16" viewBox="0 0 26 16"><polyline points="2,2 13,13 24,2" fill="none" stroke="#33383b" stroke-width="3.5"/></svg>
<div class="abs" style="left:1544px;top:934px;width:968px;height:99px;border:2px solid #ebebeb;border-radius:7px;background:#fefefe"></div>
<svg class="abs" style="left:1578px;top:964px;" width="40" height="40" viewBox="0 0 40 40"><rect x="1.7" y="1.7" width="36.6" height="36.6" rx="5.5" fill="none" stroke="#23292d" stroke-width="3.4"/></svg>
<div class="t" style="left:1642.5px;top:970.7px;font-size:28px;font-weight:400;color:#1f2427;letter-spacing:0.025px;">VAT rate</div>
<svg class="abs" style="left:2449px;top:976px;" width="26" height="16" viewBox="0 0 26 16"><polyline points="2,2 13,13 24,2" fill="none" stroke="#33383b" stroke-width="3.5"/></svg>
<div class="t" style="left:1544px;top:1140.8px;font-size:35px;font-weight:700;color:#0f1417;letter-spacing:0.113px;">Advanced filters</div>
<div class="abs" style="left:1496px;top:1199px;width:1061px;height:72px;overflow:hidden">
<div class="abs" style="left:48px;top:0px;width:968px;height:99px;border:2px solid #ebebeb;border-radius:7px;background:#fefefe"></div>
<svg class="abs" style="left:82px;top:30px;" width="40" height="40" viewBox="0 0 40 40"><rect x="0" y="0" width="40" height="40" rx="6" fill="#23292d"/><polyline points="9.5,20.5 16,27.5 31.5,12.5" fill="none" stroke="#fff" stroke-width="2.8"/></svg>
<div class="t" style="left:146.5px;top:35.7px;font-size:28px;font-weight:400;color:#1f2427;letter-spacing:0.25px;">Approval status</div>
<svg class="abs" style="left:953px;top:41px;" width="26" height="16" viewBox="0 0 26 16"><polyline points="2,2 13,13 24,2" fill="none" stroke="#33383b" stroke-width="3.5"/></svg>
</div>
<div class="abs" style="left:1525px;top:1266px;width:1012px;height:8px;background:linear-gradient(rgba(0,0,0,0),rgba(0,0,0,0.025))"></div>
<div class="abs" style="left:1544px;top:1320px;width:282px;height:72px;background:#23292d;border-radius:8px"></div>
<div class="t" style="left:1592.5px;top:1343.2px;font-size:28px;font-weight:400;color:#ffffff;letter-spacing:-0.045px;">Apply filters (4)</div>
<div class="t" style="left:1922.5px;top:1343.2px;font-size:28px;font-weight:400;color:#1f2427;letter-spacing:-0.213px;text-decoration:underline;text-underline-offset:3px;text-decoration-thickness:2px;">Clear all</div>
</body></html>
